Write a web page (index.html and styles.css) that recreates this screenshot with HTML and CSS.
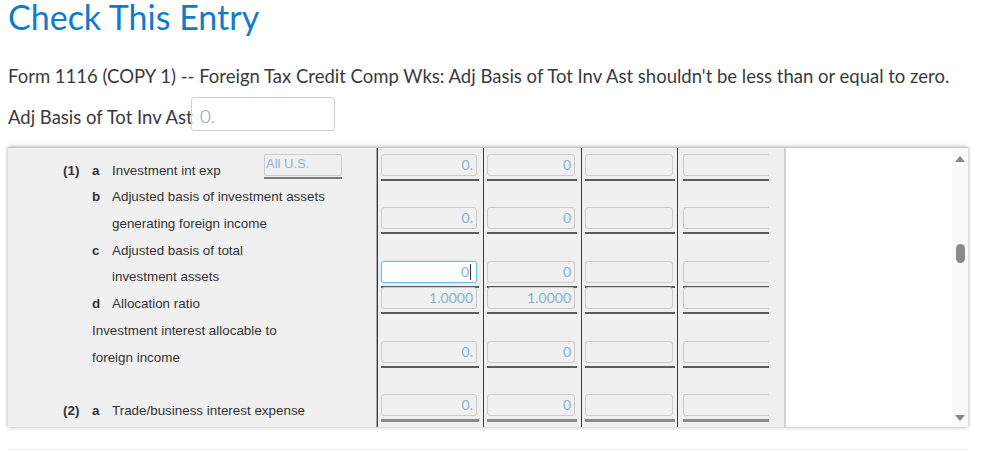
FILE: index.html
```html
<!DOCTYPE html>
<html>
<head>
<meta charset="utf-8">
<link rel="stylesheet" href="styles.css">
</head>
<body>
<div class="page">
  <h1 class="title">Check This Entry</h1>
  <p class="message">Form 1116 (COPY 1) -- Foreign Tax Credit Comp Wks: Adj Basis of Tot Inv Ast shouldn't be less than or equal to zero.</p>
  <div class="field">
    <span class="field-label">Adj Basis of Tot Inv Ast</span>
    <span class="field-input">0.</span>
  </div>

  <div class="panel">
    <div class="form">
      <div class="labels">
        <div class="lrow"><span class="num">(1)</span><span class="let">a</span><span class="txt">Investment int exp</span><span class="allus"><span class="allus-box">All U.S.</span></span></div>
        <div class="lrow"><span class="num"></span><span class="let">b</span><span class="txt">Adjusted basis of investment assets</span></div>
        <div class="lrow"><span class="num"></span><span class="let"></span><span class="txt">generating foreign income</span></div>
        <div class="lrow"><span class="num"></span><span class="let">c</span><span class="txt">Adjusted basis of total</span></div>
        <div class="lrow"><span class="num"></span><span class="let"></span><span class="txt">investment assets</span></div>
        <div class="lrow"><span class="num"></span><span class="let">d</span><span class="txt">Allocation ratio</span></div>
        <div class="lrow"><span class="num"></span><span class="wide">Investment interest allocable to</span></div>
        <div class="lrow"><span class="num"></span><span class="wide">foreign income</span></div>
        <div class="lrow"></div>
        <div class="lrow"><span class="num">(2)</span><span class="let">a</span><span class="txt">Trade/business interest expense</span></div>
      </div>

      <div class="col col-1">
        <div class="slot"><div class="box">0.</div><div class="rule"></div></div>
        <div class="slot"></div>
        <div class="slot"><div class="box">0.</div><div class="rule"></div></div>
        <div class="slot"></div>
        <div class="slot"><div class="box focus">0<span class="caret"></span></div><div class="rule"></div></div>
        <div class="slot"><div class="box">1.0000</div><div class="rule"></div></div>
        <div class="slot"></div>
        <div class="slot"><div class="box">0.</div><div class="rule"></div></div>
        <div class="slot"></div>
        <div class="slot"><div class="box">0.</div><div class="rule last"></div></div>
      </div>

      <div class="col col-2">
        <div class="slot"><div class="box">0</div><div class="rule"></div></div>
        <div class="slot"></div>
        <div class="slot"><div class="box">0</div><div class="rule"></div></div>
        <div class="slot"></div>
        <div class="slot"><div class="box">0</div><div class="rule"></div></div>
        <div class="slot"><div class="box">1.0000</div><div class="rule"></div></div>
        <div class="slot"></div>
        <div class="slot"><div class="box">0</div><div class="rule"></div></div>
        <div class="slot"></div>
        <div class="slot"><div class="box">0</div><div class="rule last"></div></div>
      </div>

      <div class="col col-3">
        <div class="slot"><div class="box"></div><div class="rule"></div></div>
        <div class="slot"></div>
        <div class="slot"><div class="box"></div><div class="rule"></div></div>
        <div class="slot"></div>
        <div class="slot"><div class="box"></div><div class="rule"></div></div>
        <div class="slot"><div class="box"></div><div class="rule"></div></div>
        <div class="slot"></div>
        <div class="slot"><div class="box"></div><div class="rule"></div></div>
        <div class="slot"></div>
        <div class="slot"><div class="box"></div><div class="rule last"></div></div>
      </div>

      <div class="col col-4">
        <div class="slot"><div class="box"></div><div class="rule"></div></div>
        <div class="slot"></div>
        <div class="slot"><div class="box"></div><div class="rule"></div></div>
        <div class="slot"></div>
        <div class="slot"><div class="box"></div><div class="rule"></div></div>
        <div class="slot"><div class="box"></div><div class="rule"></div></div>
        <div class="slot"></div>
        <div class="slot"><div class="box"></div><div class="rule"></div></div>
        <div class="slot"></div>
        <div class="slot"><div class="box"></div><div class="rule last"></div></div>
      </div>
    </div>

    <div class="blank">
      <div class="scrollbar">
        <span class="arrow-up"></span>
        <span class="thumb"></span>
        <span class="arrow-down"></span>
      </div>
    </div>
  </div>

  <div class="footer-line"></div>
</div>
</body>
</html>
```

FILE: styles.css
```css
html, body {
  margin: 0;
  padding: 0;
  background: #ffffff;
}

.page {
  padding: 0 8px;
  width: 960px;
}

.title {
  margin: 0;
  font-family: "Lato", "Open Sans", sans-serif;
  font-weight: 400;
  font-size: 34px;
  line-height: 33px;
  color: #0f7bcb;
}

.message {
  margin: 32px 0 0 0;
  font-family: "Lato", "Open Sans", sans-serif;
  font-size: 18.5px;
  line-height: 22px;
  color: #393a3d;
}

.field {
  display: flex;
  align-items: center;
  margin-top: 10px;
  height: 34px;
  font-family: "Lato", "Open Sans", sans-serif;
  font-size: 18.5px;
  color: #393a3d;
}

.field-label {
  width: 183px;
  white-space: nowrap;
  padding-top: 6px;
}

.field-input {
  box-sizing: border-box;
  width: 144px;
  height: 34px;
  border: 1px solid #cfcfcf;
  border-radius: 3px;
  padding: 8px 8px 4px 8px;
  line-height: 20px;
  color: #8d9096;
  font-weight: 300;
}

.panel {
  display: flex;
  margin-top: 16px;
  height: 280px;
  box-shadow: 0 0 4px rgba(0, 0, 0, 0.35);
  border-top: 1px solid #c8c8c8;
  box-sizing: border-box;
}

.form {
  display: flex;
  width: 776px;
  background: #f0f0f0;
  border-right: 2px solid #d2d2d2;
  overflow: hidden;
}

.labels {
  width: 368px;
  padding-top: 6px;
  font-family: "Liberation Sans", Arial, sans-serif;
  font-size: 13.4px;
  color: #333333;
  border-right: 1px solid #a8a8a8;
}

.lrow {
  display: flex;
  align-items: flex-end;
  height: 26.7px;
  position: relative;
}

.lrow > span {
  line-height: 20px;
}

.num {
  width: 29px;
  margin-left: 55px;
  font-weight: bold;
}

.let {
  width: 20px;
  font-weight: bold;
}

.txt, .wide {
  white-space: nowrap;
}

.allus {
  position: absolute;
  left: 256px;
  top: 0;
  width: 78px;
  border-bottom: 2px solid #777;
  padding-bottom: 1px;
}

.allus-box {
  display: block;
  box-sizing: border-box;
  height: 22px;
  border: 1px solid #cccccc;
  border-radius: 2px;
  padding-left: 1px;
  font-family: "Liberation Sans", Arial, sans-serif;
  font-size: 13px;
  line-height: 18px;
  color: #8bb4da;
}

.col {
  box-sizing: border-box;
  padding-top: 6px;
  border-left: 1px solid #3a3a3a;
  padding-left: 3px;
}

.col-1 { width: 106px; padding-right: 4px; }
.col-2 { width: 98px; padding-right: 4px; }
.col-3 { width: 96px; padding-right: 2px; }
.col-4 { width: 92px; padding-right: 0; padding-left: 5px; }

.slot {
  height: 26.7px;
}

.box {
  box-sizing: border-box;
  height: 22px;
  width: calc(100% - 2px);
  border: 1px solid #cbcbcb;
  border-radius: 3px;
  padding-right: 3px;
  text-align: right;
  font-family: "Lato", "Open Sans", sans-serif;
  font-size: 14px;
  line-height: 20px;
  color: #86b0d6;
}

.col-4 .box {
  width: 100%;
  border-right: none;
  border-radius: 3px 0 0 3px;
}

.box.focus {
  background: #ffffff;
  border: 1px solid #6cbcf0;
  box-shadow: 0 0 2px #8fd0ff;
  padding-right: 5px;
}

.caret {
  display: inline-block;
  width: 1px;
  height: 16px;
  margin-left: 1px;
  vertical-align: -3px;
  background: #333;
}

.rule {
  margin-top: 3px;
  height: 2px;
  background: #5c5c5c;
}

.rule.last {
  height: 3px;
  background: #8a8a8a;
}

.blank {
  flex: 1;
  display: flex;
  justify-content: flex-end;
  background: #ffffff;
}

.scrollbar {
  width: 16px;
  background: #fafafa;
  display: flex;
  flex-direction: column;
  align-items: center;
  padding: 8px 0 6px 0;
  box-sizing: border-box;
}

.arrow-up {
  width: 0;
  height: 0;
  border-left: 5px solid transparent;
  border-right: 5px solid transparent;
  border-bottom: 6px solid #888888;
}

.thumb {
  margin-top: 82px;
  width: 9px;
  height: 19px;
  border-radius: 5px;
  background: #8a8a8a;
}

.arrow-down {
  margin-top: auto;
  width: 0;
  height: 0;
  border-left: 5px solid transparent;
  border-right: 5px solid transparent;
  border-top: 6px solid #888888;
}

.footer-line {
  margin-top: 22px;
  height: 1px;
  background: #eeeeee;
}
```
